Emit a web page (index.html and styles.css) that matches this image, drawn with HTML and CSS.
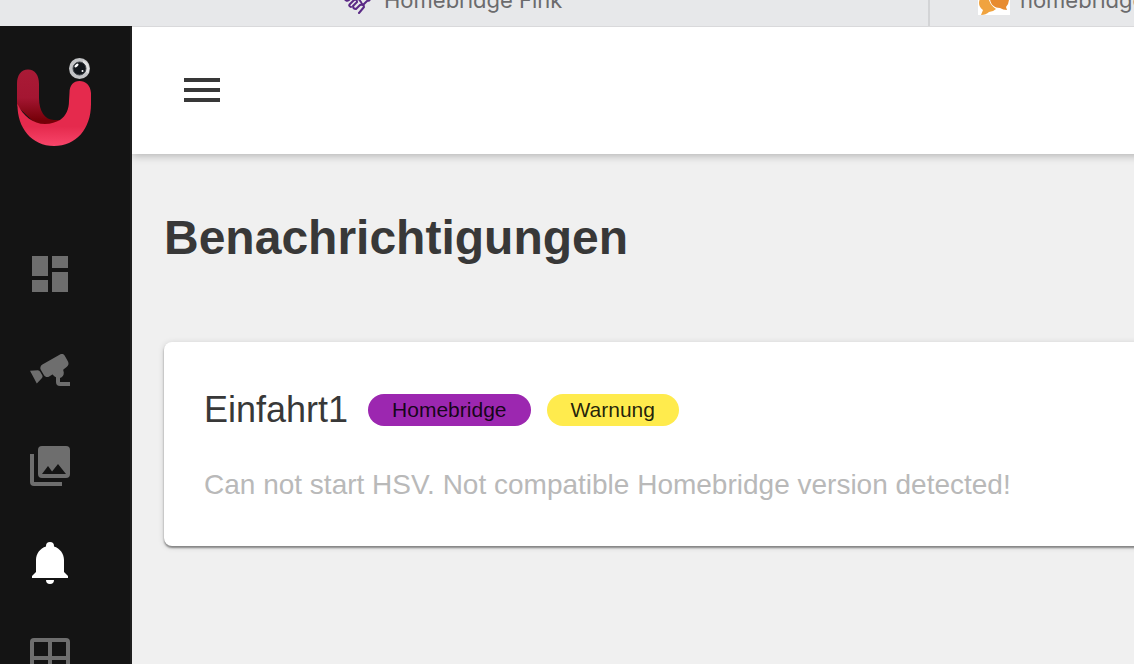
FILE: index.html
```html
<!DOCTYPE html>
<html lang="de">
<head>
    <meta charset="UTF-8">
    <meta name="viewport" content="width=device-width, initial-scale=1.0">
    <title>Benachrichtigungen</title>
    <link rel="stylesheet" href="styles.css">
</head>
<body>
    <div class="tab-bar">
        <a class="tab tab-first" href="#">
            <svg class="tab-icon" viewBox="0 0 32 32" fill="none" stroke="#5b2a86" stroke-width="2" stroke-linecap="round" stroke-linejoin="round">
                <path d="M2 15q2 4 5 2l3-3"/>
                <path d="M9 24q-3-1-1-3l4-4q3-1 3 2l-4 4q0 3 3 3l4-4q4-1 4 2l-5 6"/>
                <path d="M15 14l4 5q1 3 3 2l3-3q3 0 3-2l-2-4"/>
            </svg>
            <span>Homebridge Fink</span>
        </a>
        <a class="tab tab-second" href="#">
            <svg class="tab-icon" viewBox="0 0 32 32">
                <rect width="32" height="32" fill="#fff"/>
                <path d="M10 10C4 11 1 16 1 20q0 4 4 7l-2 5q5 0 8-3 4 0 7-3-8-5-8-16z" fill="#f0a33f"/>
                <path d="M21 5c-6 0-9 5-9 10 0 6 4 10 10 10q3 2 7 2l-1-3q3-3 3-8c0-6-4-11-10-11z" fill="#e78b2f"/>
            </svg>
            <span>homebridge</span>
        </a>
    </div>

    <div class="app">
        <aside class="sidebar">
            <a class="logo" href="#" aria-label="Start">
                <svg viewBox="16 56 78 92" width="78" height="92">
                    <defs>
                        <linearGradient id="arm" x1="0" y1="0" x2="0" y2="1">
                            <stop offset="0" stop-color="#aa1a36"/>
                            <stop offset="0.5" stop-color="#a41632"/>
                            <stop offset="0.9" stop-color="#760008"/>
                        </linearGradient>
                        <linearGradient id="body" x1="0" y1="0" x2="0" y2="1">
                            <stop offset="0" stop-color="#e52a4d"/>
                            <stop offset="0.7" stop-color="#e52a4d"/>
                            <stop offset="1" stop-color="#f8456a"/>
                        </linearGradient>
                    </defs>
                    <path d="M17 106V84C17 75 21 69.500 28 69.500S39 75 39 84v14c0 13 6 22 15 22h6l-8 6H38z" fill="url(#arm)"/>
                    <path d="M17.500 104C23 116 33 124 45 124c6 0 11-2 15-4 6-4 9-11 9-19l.5-8c0-8 4-12 10-12s11 4 11.500 12v11c0 25-15 42-37 42S17 128 17.500 104z" fill="url(#body)"/>
                    <circle cx="79.500" cy="68.500" r="10.500" fill="#c3c4c6"/>
                    <path d="M83 61.500a8.500 8.500 0 0 1 4 11" fill="none" stroke="#e2e2e3" stroke-width="3"/>
                    <circle cx="79.500" cy="68.500" r="6.500" fill="#12161b" stroke="#42474c"/>
                    <ellipse cx="76.500" cy="65.500" rx="2.500" ry="1.200" transform="rotate(-40 76.500 65.500)" fill="#fff"/>
                    <circle cx="82.500" cy="71" r="1" fill="#fff"/>
                </svg>
            </a>
            <nav class="nav">
                <a class="nav-link" href="#" aria-label="Dashboard">
                    <svg class="icon" viewBox="0 0 24 24"><path d="M13,3V9H21V3M13,21H21V11H13M3,21H11V15H3M3,13H11V3H3V13Z"/></svg>
                </a>
                <a class="nav-link" href="#" aria-label="Kameras">
                    <svg class="icon" viewBox="0 0 24 24"><path d="M19.300 4.700C18.700 3.900 17.800 3.800 17 4.200L8.200 9.200C7.200 9.800 6.900 10.900 7.400 11.900L9 14.600C9.600 15.500 10.700 15.700 11.600 15.200L13.200 14.300C13.500 14.300 13.600 15 15 15.600V18A2 2 0 0 0 17 20H22V18H17V16C18.200 15.600 19 14.600 18.900 13.200C18.800 12.600 18.500 12.200 18.700 11.800L20.300 10.500C21.300 9.900 21.500 8.800 21 7.800zM2 12.400L5.900 12.100Q6.700 12.100 7.100 12.900L8.200 14.800Q8.500 15.400 8 16L5.400 18.700z"/></svg>
                </a>
                <a class="nav-link" href="#" aria-label="Aufnahmen">
                    <svg class="icon" viewBox="0 0 24 24"><path d="M22,16V4A2,2 0 0,0 20,2H8A2,2 0 0,0 6,4V16A2,2 0 0,0 8,18H20A2,2 0 0,0 22,16M11,12L13.030,14.710L16,11L20,16H8M2,6V20A2,2 0 0,0 4,22H18V20H4V6"/></svg>
                </a>
                <a class="nav-link active" href="#" aria-label="Benachrichtigungen">
                    <svg class="icon" viewBox="0 0 24 24"><path d="M21,19V20H3V19L5,17V11C5,7.900 7.030,5.170 10,4.290C10,4.190 10,4.100 10,4A2,2 0 0,1 12,2A2,2 0 0,1 14,4C14,4.100 14,4.190 14,4.290C16.970,5.170 19,7.900 19,11V17L21,19M14,21A2,2 0 0,1 12,23A2,2 0 0,1 10,21"/></svg>
                </a>
                <a class="nav-link" href="#" aria-label="Kameraansicht">
                    <svg class="icon" viewBox="0 0 24 24"><path fill-rule="evenodd" d="M4 2H20A2 2 0 0 1 22 4V20A2 2 0 0 1 20 22H4A2 2 0 0 1 2 20V4A2 2 0 0 1 4 2M4 4V11H11V4M13 4V11H20V4M4 13V20H11V13M13 13V20H20V13Z"/></svg>
                </a>
            </nav>
        </aside>

        <div class="content">
            <header class="toolbar">
                <button class="menu-button" type="button" aria-label="Menü">
                    <svg class="icon" viewBox="0 0 24 24"><path d="M3,6H21V8H3V6M3,11H21V13H3V11M3,16H21V18H3V16Z"/></svg>
                </button>
            </header>
            <main class="page">
                <h1>Benachrichtigungen</h1>
                <article class="card">
                    <div class="card-head">
                        <h2>Einfahrt1</h2>
                        <span class="chip chip-source">Homebridge</span>
                        <span class="chip chip-warning">Warnung</span>
                    </div>
                    <p class="message">Can not start HSV. Not compatible Homebridge version detected!</p>
                </article>
            </main>
        </div>
    </div>
</body>
</html>
```
FILE: styles.css
```css
* {
    box-sizing: border-box;
}
body {
    margin: 0;
    height: 100vh;
    display: flex;
    flex-direction: column;
    overflow: hidden;
    background-color: #f0f0f0;
    color: #383838;
    font-family: "Liberation Sans", Arial, sans-serif;
}
h1, h2, p {
    margin: 0;
}

/* Browser tabs */
.tab-bar {
    display: flex;
    flex: none;
    height: 26px;
    background-color: #e7e8ea;
    overflow: hidden;
}
.tab {
    display: flex;
    align-items: flex-end;
    gap: 10px;
    padding-bottom: 11px;
    color: #6b6b6d;
    font-family: Inter, Roboto, sans-serif;
    font-size: 22px;
    line-height: 30px;
    text-decoration: none;
    white-space: nowrap;
}
.tab-first {
    flex: 0 0 82%;
    padding-left: 342px;
    border-right: 2px solid #d3d4d6;
}
.tab-second {
    padding-left: 48px;
}
.tab-icon {
    width: 32px;
    height: 32px;
    flex: none;
}

/* App */
.app {
    display: flex;
    flex: 1;
    min-height: 0;
}
.sidebar {
    flex: none;
    width: 132px;
    padding-top: 30px;
    background-color: #141414;
    border-right: 2px solid #1f1f1f;
    overflow: hidden;
}
.logo {
    display: block;
    width: 78px;
    height: 92px;
    margin-left: 16px;
}
.nav {
    display: flex;
    flex-direction: column;
    gap: 48px;
    padding: 102px 0 0 26px;
}
.nav-link {
    display: block;
    width: 48px;
    height: 48px;
    color: #6e6e6e;
}
.nav-link.active {
    color: #fff;
}
.icon {
    display: block;
    width: 48px;
    height: 48px;
    fill: currentColor;
}
.content {
    flex: 1;
    min-width: 0;
    overflow: hidden;
}
.toolbar {
    display: flex;
    align-items: center;
    height: 128px;
    margin-right: -16px;
    padding-left: 46px;
    background-color: #fff;
    box-shadow: inset 0 1px #d9d9db, 0 2px 8px rgba(0, 0, 0, 0.25);
}
.menu-button {
    padding: 0;
    border: 0;
    background: none;
    color: #383838;
    cursor: pointer;
}
.page {
    padding: 56px 0 16px 32px;
}
h1 {
    font-size: 48px;
    line-height: 56px;
}

/* Notification card */
.card {
    margin: 76px -16px 0 0;
    padding: 44px 40px 42px;
    background-color: #fff;
    border-radius: 8px;
    box-shadow: 0 2px 2px rgba(0, 0, 0, 0.4), 0 1px 6px rgba(0, 0, 0, 0.15);
}
.card-head {
    display: flex;
    align-items: center;
    gap: 16px;
}
h2 {
    margin-right: 4px;
    font-size: 36px;
    font-weight: normal;
    line-height: 48px;
}
.chip {
    padding: 0 24px;
    border-radius: 16px;
    color: rgba(0, 0, 0, 0.87);
    font-size: 21px;
    line-height: 32px;
}
.chip-source {
    background-color: #9c27b0;
}
.chip-warning {
    background-color: #ffeb4d;
}
.message {
    margin-top: 32px;
    color: #b9b9b9;
    font-size: 28px;
    line-height: 38px;
}
```
